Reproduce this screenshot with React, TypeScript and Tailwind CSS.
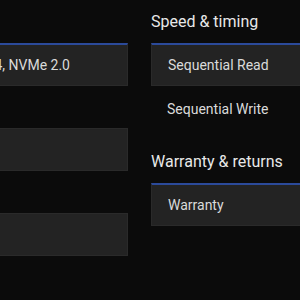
import React from "react";

const font = { fontFamily: "Roboto, 'Noto Sans', sans-serif" };

function Card({ text, active }: { text?: string; active?: boolean }) {
  return (
    <div
      className={
        "flex items-center h-[43px] px-4 bg-[#232323] border border-[#2a2a2a] text-[14px] text-[#dadada] whitespace-nowrap " +
        (active ? "border-t-2 border-t-[#2b4a9a]" : "h-[42px]")
      }
    >
      {text}
    </div>
  );
}

export default function App() {
  return (
    <div className="w-[300px] h-[300px] bg-[#0b0b0b] overflow-hidden" style={font}>
      <div className="flex gap-[23px] ml-[-172px] pt-[9px]">
        <div className="w-[300px] shrink-0 flex flex-col">
          <div className="h-[24px] mb-[10px]" />
          <div className="flex items-center justify-end h-[43px] pl-4 pr-[57px] bg-[#232323] border border-[#2a2a2a] border-t-2 border-t-[#2b4a9a] text-[14px] text-[#dadada] whitespace-nowrap overflow-hidden">
            Interface: PCIe Gen 4.0 x4, NVMe 2.0
          </div>
          <div className="h-[42px]" />
          <Card />
          <div className="h-[42px]" />
          <Card />
        </div>
        <div className="w-[300px] shrink-0 flex flex-col">
          <div className="h-[24px] leading-[26px] text-[16px] text-[#e8e8e8] mb-[10px]">Speed &amp; timing</div>
          <Card text="Sequential Read" active />
          <div className="flex items-center h-[44px] pt-[2px] px-4 text-[14px] text-[#dadada]">Sequential Write</div>
          <div className="h-[24px] leading-[26px] text-[16px] text-[#e8e8e8] mt-[19px] mb-[10px]">Warranty &amp; returns</div>
          <Card text="Warranty" active />
        </div>
      </div>
    </div>
  );
}
